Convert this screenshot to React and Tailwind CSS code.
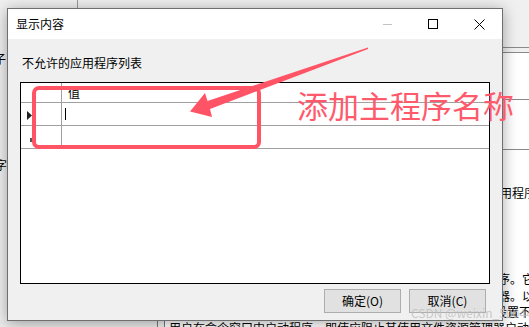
export default function App() {
  const line = 'bg-[#a0a0a0]';

  return (
    <div className="relative w-[529px] h-[327px] overflow-hidden bg-[#f0f0f0] font-['Noto_Sans_CJK_SC',sans-serif] text-[12px] text-black">
      {/* the window behind the dialog */}
      <div className="absolute left-[77px] top-0 h-[10px] w-px bg-[#9a9a9a]" />
      <div className="absolute left-[470px] top-[48px] w-[70px] h-[290px] bg-white" />
      <div className="absolute left-[470px] top-[47px] w-[70px] h-[6px] border-y border-[#8a8a8a] bg-[#f0f0f0]" />
      <div className="absolute left-[470px] top-[99px] w-[70px] h-px bg-[#8a8a8a]" />
      <div className="absolute left-[470px] top-[149px] w-[70px] h-px bg-[#8a8a8a]" />
      <div className="absolute left-[-6px] top-[52px] leading-[14px]">子</div>
      <div className="absolute left-[-5px] top-[158px] leading-[14px]">字</div>
      <div className="absolute left-[488px] top-[186px] leading-[14px] whitespace-nowrap">应用程序列表</div>
      <div className="absolute left-[486px] top-[272px] leading-[14px] whitespace-nowrap">程序。它</div>
      <div className="absolute left-[486px] top-[289px] leading-[14px] whitespace-nowrap">理器。以</div>
      <div className="absolute left-[483px] top-[305px] leading-[14px] whitespace-nowrap">的设置不</div>
      <div className="absolute left-0 top-[320px] w-full h-[10px] flex">
        <div className="w-[172px] bg-[#ececec]" />
        <div className="w-[9px] border-x border-[#7a7a7a] bg-[#f0f0f0]" />
        <div className="flex-1 bg-white pl-[4px] leading-[14px] pt-[1px] whitespace-nowrap">
          用户在命令窗口中启动程序，即使应阻止其使用文件资源管理器启动
        </div>
      </div>

      {/* dialog */}
      <div className="absolute left-[7px] top-[8px] w-[496px] h-[313px] flex flex-col border border-[#6f6f6f] bg-[#f0f0f0] shadow-[0_2px_14px_rgba(0,0,0,0.35)]">
        <div className="h-[30px] bg-white flex items-center">
          <span className="pl-[8px] flex-1 leading-[16px]">显示内容</span>
          <div className="w-[46px] h-full flex items-center justify-center">
            <div className="w-[9px] h-px bg-[#c2c2c2]" />
          </div>
          <div className="w-[46px] h-full flex items-center justify-center">
            <div className="w-[10px] h-[10px] border border-black" />
          </div>
          <div className="w-[46px] h-full flex items-center justify-center">
            <svg width="11" height="11" viewBox="0 0 11 11">
              <path d="M0.5 0.5 L10.5 10.5 M10.5 0.5 L0.5 10.5" stroke="#000" strokeWidth="1" />
            </svg>
          </div>
        </div>

        <div className="flex-1 flex flex-col pt-[16px]">
          <div className="pl-[14px] h-[16px] leading-[16px]">不允许的应用程序列表</div>

          <div className="mt-[11px] mx-[12px] h-[202px] border border-black bg-white flex flex-col">
            <div className="h-[20px] flex border-b border-[#a0a0a0]">
              <div className="w-[41px] border-r border-[#a0a0a0]" />
              <div className="pl-[6px] leading-[18px] pt-[1px]">值</div>
            </div>
            <div className="h-[23px] flex border-b border-[#a0a0a0]">
              <div className="w-[41px] border-r border-[#a0a0a0] flex items-center pl-[6px] pt-[3px]">
                <svg width="5" height="9" viewBox="0 0 5 9">
                  <path d="M0 0 L5 4.5 L0 9 Z" fill="#222" />
                </svg>
              </div>
              <div className="pl-[3px] flex items-center">
                <div className="w-px h-[12px] bg-black" />
              </div>
            </div>
            <div className="h-[23px] flex border-b border-[#a0a0a0]">
              <div className="w-[41px] border-r border-[#a0a0a0] flex items-center pl-[9px] pt-[6px]">
                <div className="w-[2px] h-[4px] bg-[#555]" />
              </div>
              <div className="flex-1" />
            </div>
          </div>

          <div className="mt-[5px] flex justify-end gap-[8px] pr-[16px]">
            <button className="w-[77px] h-[24px] bg-[#e1e1e1] border border-[#adadad] text-[12px] leading-[16px]">
              确定(O)
            </button>
            <button className="w-[77px] h-[24px] bg-[#e1e1e1] border border-[#adadad] text-[12px] leading-[16px]">
              取消(C)
            </button>
          </div>
        </div>
      </div>

      {/* red annotation on top of the screenshot */}
      <svg className="absolute left-0 top-0 pointer-events-none" width="529" height="327" viewBox="0 0 529 327">
        <rect x="34" y="88" width="225" height="59" rx="5" fill="none" stroke="#ff5366" strokeWidth="4" />
        <polygon
          points="368,47.5 207.5,101 205,93 190,111.5 212,117 210,109 368,49"
          fill="#ff5366"
        />
      </svg>
      <div className="absolute left-[297px] top-[89px] text-[31px] leading-[31px] text-[#ff5a6c] whitespace-nowrap">
        添加主程序名称
      </div>
      <div className="absolute left-[411px] top-[306px] text-[12px] leading-[14px] text-[#bdbdbd]/80 whitespace-nowrap">
        CSDN @weixin_50044963
      </div>
    </div>
  );
}
